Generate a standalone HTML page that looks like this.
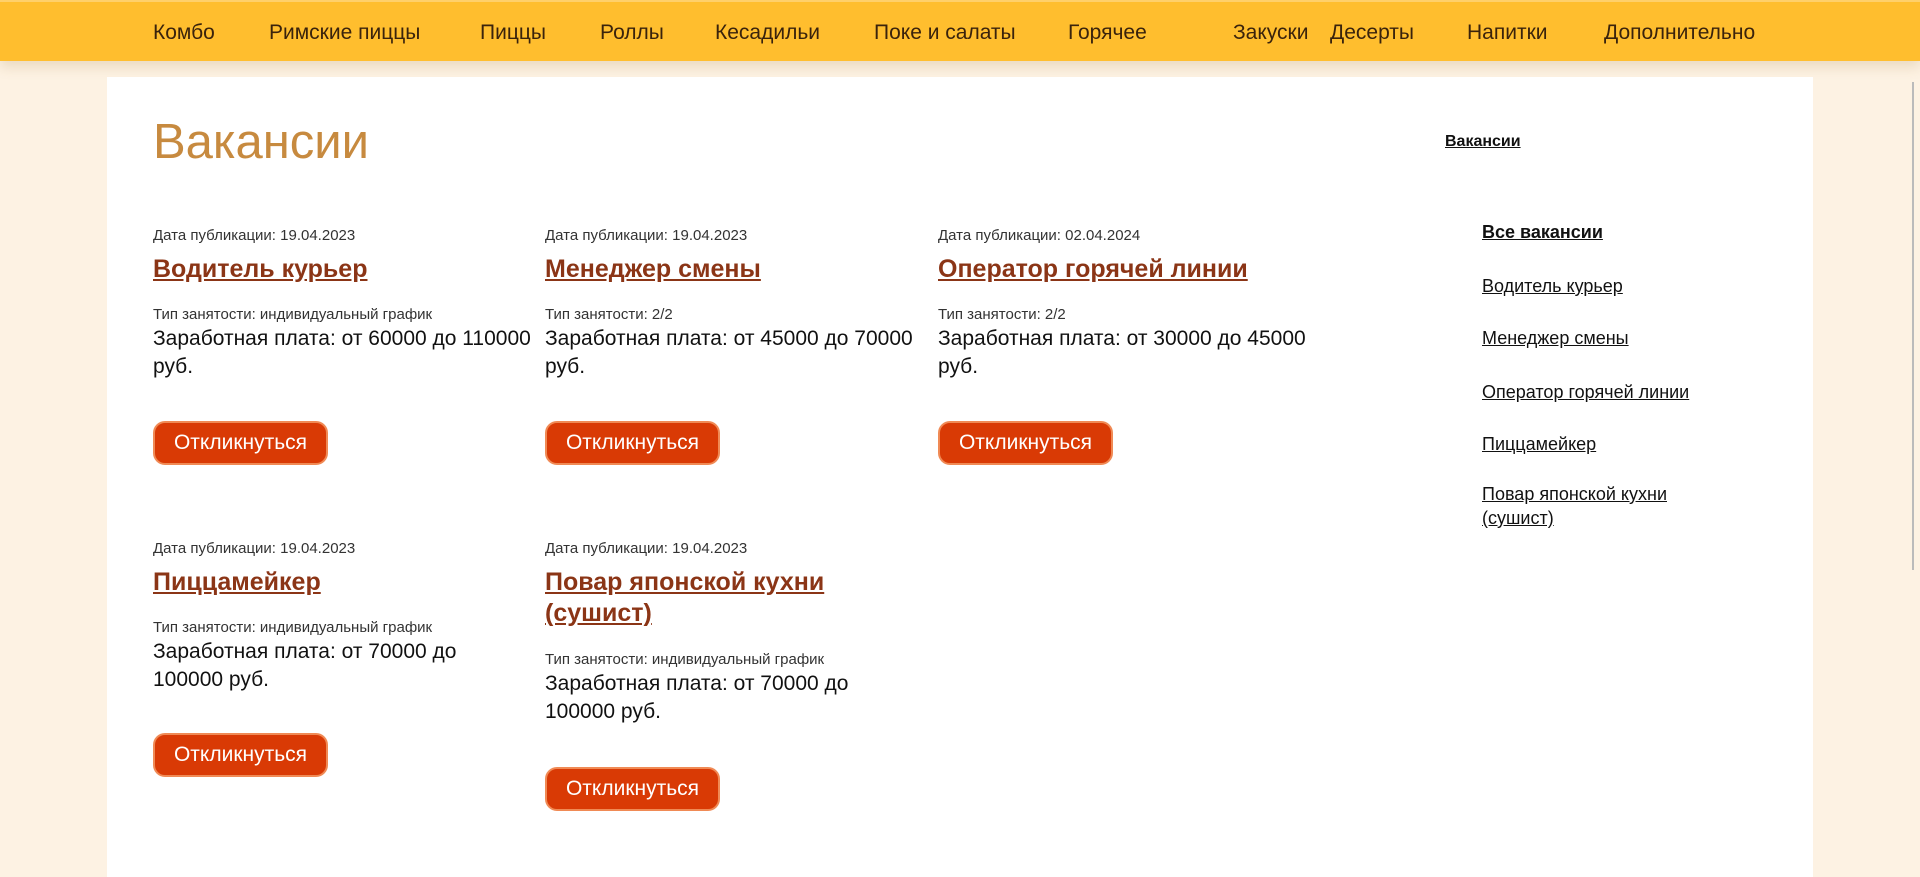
<!DOCTYPE html>
<html><head><meta charset="utf-8"><style>
*{margin:0;padding:0;box-sizing:border-box}
body{width:1920px;height:840px;overflow:hidden;background:#fdf2e3;font-family:"Liberation Sans",sans-serif;position:relative;color:#111}
.nav{position:absolute;left:0;top:0;width:1920px;height:61px;background:#ffbe2e;border-top:2px solid #ffd06a;box-shadow:0 6px 12px rgba(150,110,40,.18)}
.nav span{position:absolute;top:19px;font-size:21px;color:#3a230c;white-space:nowrap}
.panel{position:absolute;left:107px;top:77px;width:1706px;height:800px;background:#fff}
.sb{position:absolute;left:1912px;top:82px;width:2px;height:488px;background:#bbb}
.a{position:absolute;white-space:nowrap}
h1{position:absolute;left:153px;top:114px;font-size:49px;font-weight:normal;color:#c78a3f}
.d{font-size:15px;color:#333}
.t{font-size:25px;font-weight:bold;color:#8b3516;text-decoration:underline;line-height:31px}
.s{font-size:21px;line-height:28px;color:#111}
.b{position:absolute;width:175px;height:44px;border-radius:12px;background:#d93a05;border:2px solid #f08a55;color:#fff;font-size:21px;text-align:center;line-height:40px}
.r{position:absolute;font-size:18px;color:#111;text-decoration:underline;white-space:nowrap;line-height:24px}
</style></head><body>
<div class="nav">
<span style="left:153px">Комбо</span><span style="left:269px">Римские пиццы</span><span style="left:480px">Пиццы</span><span style="left:600px">Роллы</span><span style="left:715px">Кесадильи</span><span style="left:874px">Поке и салаты</span><span style="left:1068px">Горячее</span><span style="left:1233px">Закуски</span><span style="left:1330px">Десерты</span><span style="left:1467px">Напитки</span><span style="left:1604px">Дополнительно</span>
</div>
<div class="panel"></div>
<div class="sb"></div>
<h1>Вакансии</h1>

<div class="a d" style="left:153px;top:227px">Дата публикации: 19.04.2023</div>
<div class="a t" style="left:153px;top:254px">Водитель курьер</div>
<div class="a d" style="left:153px;top:306px">Тип занятости: индивидуальный график</div>
<div class="a s" style="left:153px;top:325px">Заработная плата: от 60000 до 110000<br>руб.</div>
<div class="b" style="left:153px;top:421px">Откликнуться</div>

<div class="a d" style="left:545px;top:227px">Дата публикации: 19.04.2023</div>
<div class="a t" style="left:545px;top:254px">Менеджер смены</div>
<div class="a d" style="left:545px;top:306px">Тип занятости: 2/2</div>
<div class="a s" style="left:545px;top:325px">Заработная плата: от 45000 до 70000<br>руб.</div>
<div class="b" style="left:545px;top:421px">Откликнуться</div>

<div class="a d" style="left:938px;top:227px">Дата публикации: 02.04.2024</div>
<div class="a t" style="left:938px;top:254px">Оператор горячей линии</div>
<div class="a d" style="left:938px;top:306px">Тип занятости: 2/2</div>
<div class="a s" style="left:938px;top:325px">Заработная плата: от 30000 до 45000<br>руб.</div>
<div class="b" style="left:938px;top:421px">Откликнуться</div>

<div class="a d" style="left:153px;top:540px">Дата публикации: 19.04.2023</div>
<div class="a t" style="left:153px;top:567px">Пиццамейкер</div>
<div class="a d" style="left:153px;top:619px">Тип занятости: индивидуальный график</div>
<div class="a s" style="left:153px;top:638px">Заработная плата: от 70000 до<br>100000 руб.</div>
<div class="b" style="left:153px;top:733px">Откликнуться</div>

<div class="a d" style="left:545px;top:540px">Дата публикации: 19.04.2023</div>
<div class="a t" style="left:545px;top:567px">Повар японской кухни<br>(сушист)</div>
<div class="a d" style="left:545px;top:651px">Тип занятости: индивидуальный график</div>
<div class="a s" style="left:545px;top:670px">Заработная плата: от 70000 до<br>100000 руб.</div>
<div class="b" style="left:545px;top:767px">Откликнуться</div>

<div class="r" style="left:1445px;top:130px;font-size:16px;font-weight:bold">Вакансии</div>
<div class="r" style="left:1482px;top:220px;font-weight:bold">Все вакансии</div>
<div class="r" style="left:1482px;top:274px">Водитель курьер</div>
<div class="r" style="left:1482px;top:326px">Менеджер смены</div>
<div class="r" style="left:1482px;top:380px">Оператор горячей линии</div>
<div class="r" style="left:1482px;top:432px">Пиццамейкер</div>
<div class="r" style="left:1482px;top:482px">Повар японской кухни<br>(сушист)</div>
</body></html>
